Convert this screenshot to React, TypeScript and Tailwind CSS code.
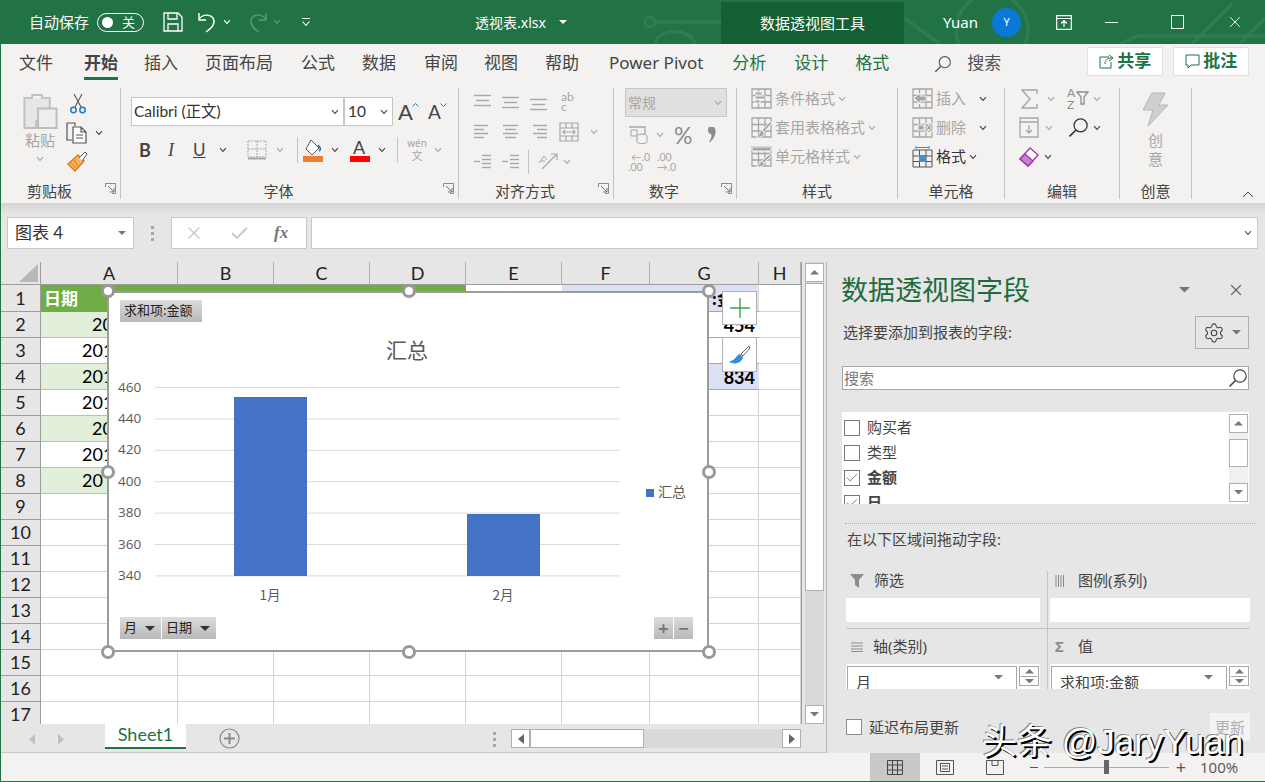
import React from 'react';
import { Settings, X, Check } from 'lucide-react';

const Chev = ({ c = '#444', className = '' }: { c?: string; className?: string }) => (
	<svg width="8" height="6" viewBox="0 0 8 6" className={`shrink-0 ${className}`}>
		<path d="M1 1.2 4 4.4 7 1.2" fill="none" stroke={c} strokeWidth="1.1" />
	</svg>
);

const Caret = ({ c = '#666', w = 10, up = false }: { c?: string; w?: number; up?: boolean }) => (
	<svg width={w} height={w / 2} viewBox="0 0 10 5" className="shrink-0">
		<path d={up ? 'M0 5 5 0 10 5Z' : 'M0 0 5 5 10 0Z'} fill={c} />
	</svg>
);

const Glass = ({ s = 20, c = '#444' }: { s?: number; c?: string }) => (
	<svg width={s} height={s} viewBox="0 0 20 20" className="shrink-0">
		<circle cx="12" cy="8" r="6.2" fill="none" stroke={c} strokeWidth="1.2" />
		<path d="M7.6 12.4 1.5 18.5" stroke={c} strokeWidth="1.5" />
	</svg>
);

// align-group line icon, each entry: [x1, x2, y]
const Lines = ({ rows, c = '#a8a8a8' }: { rows: number[][]; c?: string }) => (
	<svg width="19" height="18" viewBox="0 0 19 18" className="shrink-0">
		{rows.map((r, i) => (
			<path key={i} d={`M${r[0]} ${r[2]}.5H${r[1]}`} stroke={c} strokeWidth="1.4" />
		))}
	</svg>
);

const Launcher = () => (
	<svg width="11" height="11" viewBox="0 0 11 11" className="absolute right-[4px] bottom-[5px]">
		<path d="M.5 4V.5H10.5V10.5H7" fill="none" stroke="#8a8a8a" />
		<path d="M3 3 9 9M9 5V9H5" fill="none" stroke="#777" />
	</svg>
);

const Group = ({ w, label, launcher, children }: { w: string; label: string; launcher?: boolean; children: React.ReactNode }) => (
	<div className={`relative flex flex-col shrink-0 my-[4px] border-r border-[#c4c2c0] ${w}`}>
		<div className="flex-1 -mt-[4px] min-h-0">{children}</div>
		<div className={`h-[17px] text-center text-[15px] leading-[14px] text-[#444] -mb-[2px] ${launcher ? 'pr-[22px]' : ''}`}>{label}</div>
		{launcher && <Launcher />}
	</div>
);

const tabs = [
	{ t: '文件', c: 'ml-[18px] text-[#444]' },
	{ t: '开始', c: 'ml-[31px] font-bold text-[#444] border-b-[3px] border-[#217346]' },
	{ t: '插入', c: 'ml-[26px] text-[#444]' },
	{ t: '页面布局', c: 'ml-[27px] text-[#444]' },
	{ t: '公式', c: 'ml-[28px] text-[#444]' },
	{ t: '数据', c: 'ml-[27px] text-[#444]' },
	{ t: '审阅', c: 'ml-[28px] text-[#444]' },
	{ t: '视图', c: 'ml-[26px] text-[#444]' },
	{ t: '帮助', c: 'ml-[27px] text-[#444]' },
	{ t: 'Power Pivot', c: 'ml-[30px] text-[#444]' },
	{ t: '分析', c: 'ml-[29px] text-[#217346]' },
	{ t: '设计', c: 'ml-[28px] text-[#217346]' },
	{ t: '格式', c: 'ml-[27px] text-[#217346]' },
];

const TitleBar = () => (
	<div className="relative flex items-center h-[44px] shrink-0 bg-[#217346] text-white overflow-hidden">
		<svg width="1265" height="44" viewBox="0 0 1265 44" className="absolute left-0 top-0">
			<g fill="none" stroke="#2f7c53" strokeWidth="3.5">
				<circle cx="650" cy="22" r="5" />
				<path d="M655 22H721M655 44C656 35 668 30 680 32 690 34 694 40 695 44M904 18 940 44" />
				<circle cx="992" cy="30" r="36" />
				<path d="M1120 44 1137 36H1265M1192 44 1232 4M1240 44 1265 18" />
			</g>
		</svg>
		<span className="relative ml-[29px] w-[60px] text-[15px] whitespace-nowrap">自动保存</span>
		<div className="relative flex items-center justify-between ml-[8px] w-[47px] h-[19px] rounded-full border border-white pl-[4px] pr-[8px]">
			<span className="w-[11px] h-[11px] rounded-full bg-white" />
			<span className="text-[13px] leading-none">关</span>
		</div>
		<svg width="20" height="20" viewBox="0 0 20 20" className="relative ml-[19px]">
			<path d="M1 1H15L19 5V19H1ZM5 1V7H14V1M5 19V12H15V19" fill="none" stroke="#fff" strokeWidth="1.3" />
		</svg>
		<svg width="21" height="22" viewBox="0 0 21 22" className="relative ml-[14px]">
			<path d="M2 2V9H9M2 8C6 3 13 3 16 7 19 12 15 17 9 21" fill="none" stroke="#fff" strokeWidth="1.4" />
		</svg>
		<Chev c="#fff" className="relative ml-[5px]" />
		<svg width="21" height="22" viewBox="0 0 21 22" className="relative ml-[16px]">
			<path d="M19 2V9H12M19 8C15 3 8 3 5 7 2 12 6 17 12 21" fill="none" stroke="#5f9a7b" strokeWidth="1.4" />
		</svg>
		<Chev c="#5f9a7b" className="relative ml-[5px]" />
		<svg width="10" height="10" viewBox="0 0 10 10" className="relative ml-[20px]">
			<path d="M1 1.5H9M1.5 4.5 5 8.5 8.5 4.5" fill="none" stroke="#fff" strokeWidth="1.1" />
		</svg>
		<span className="relative ml-[164px] w-[77px] text-[14px] whitespace-nowrap">透视表.xlsx</span>
		<span className="relative ml-[7px]"><Caret c="#fff" w={8} /></span>
		<div className="relative flex items-center justify-center self-end ml-[154px] w-[183px] h-[42px] bg-[#155f34] text-[15px]">数据透视图工具</div>
		<span className="relative ml-[39px] w-[35px] text-[15px]">Yuan</span>
		<div className="relative flex items-center justify-center ml-[14px] w-[29px] h-[29px] rounded-full bg-[#0a78d8] text-[11px]">Y</div>
		<svg width="16" height="15" viewBox="0 0 16 15" className="relative ml-[35px]">
			<path d="M.7.7H15.3V14.3H.7ZM.7 3.5H15.3M8 12V6M5 8.5 8 5.5 11 8.5" fill="none" stroke="#fff" strokeWidth="1.2" />
		</svg>
		<span className="relative ml-[33px] w-[13px] h-[1px] bg-white" />
		<span className="relative ml-[53px] w-[13px] h-[14px] border border-white" />
		<X size={18} strokeWidth={1.2} className="relative ml-[42px]" />
	</div>
);

const TabRow = () => (
	<div className="flex items-center h-[40px] shrink-0 bg-[#f3f2f1] text-[17px]">
		{tabs.map(tab => (
			<span key={tab.t} className={`h-[32px] leading-[30px] whitespace-nowrap ${tab.c}`}>{tab.t}</span>
		))}
		<span className="ml-[45px]"><Glass s={18} c="#555" /></span>
		<span className="ml-[15px] h-[32px] leading-[30px] text-[#555]">搜索</span>
		<div className="flex items-center justify-center ml-[86px] mb-[6px] w-[76px] h-[29px] bg-white border border-[#e1dfdd] rounded-[2px] text-[#217346] font-bold text-[17px]">
			<svg width="15" height="15" viewBox="0 0 15 15" className="mr-[3px]">
				<path d="M10 3H1V14H12V8M6 10C6 6 8 4 13 4M10 1 14 4 10 7" fill="none" stroke="#217346" />
			</svg>
			共享
		</div>
		<div className="flex items-center justify-center ml-[10px] mb-[6px] w-[76px] h-[29px] bg-white border border-[#e1dfdd] rounded-[2px] text-[#217346] font-bold text-[17px]">
			<svg width="15" height="15" viewBox="0 0 15 15" className="mr-[3px]">
				<path d="M1 1H14V11H6L3 14V11H1Z" fill="none" stroke="#217346" />
			</svg>
			批注
		</div>
	</div>
);

const lineL = [[1, 15, 2], [1, 11, 6], [1, 15, 10], [1, 11, 14]];
const lineC = [[2, 17, 2], [4, 15, 6], [2, 17, 10], [4, 15, 14]];
const lineR = [[4, 18, 2], [8, 18, 6], [4, 18, 10], [8, 18, 14]];
const GRID = '#a6a6a6';

// grid glyph of the styles / cells rows, extra = what is drawn over the grid
const SmallGrid = ({ extra }: { extra: string }) => (
	<svg width="21" height="21" viewBox="0 0 21 21" className="shrink-0">
		<path d="M1 1H20V20H1ZM7.5 1V20M14 1V20M1 7.5H20M1 14H20" fill="none" stroke={GRID} strokeWidth="1.3" />
		<path d={extra} fill="#a6a6a6" stroke="#f3f2f1" strokeWidth="1" />
	</svg>
);

const styleRows = [
	{ t: '条件格式', d: 'M4 4H11V7H4ZM4 8H15V11H4ZM4 12H9V15H4Z' },
	{ t: '套用表格格式', d: 'M20 4 21 6 13 15 11 13ZM11 13C8 14 9 18 5 20 10 21 14 19 13 15Z' },
	{ t: '单元格样式', d: 'M1 1H20V5H1ZM20 7 21 9 13 17 11 15ZM11 15C8 16 9 19 5 21 10 21 14 20 13 17Z' },
];

const Ribbon = () => (
	<div className="flex h-[119px] shrink-0 bg-[#f3f2f1]">
		<Group w="w-[120px]" label="剪贴板" launcher>
			<div className="flex pl-[21px] pt-[9px]">
				<div className="flex flex-col items-center w-[36px]">
					<svg width="36" height="36" viewBox="0 0 36 37">
						<path d="M2 5H28V29H14V36H2Z" fill="#e6e6e6" stroke="#c0c0c0" strokeWidth="2" />
						<path d="M10 6V2H20V6" fill="#f3f2f1" stroke="#c0c0c0" strokeWidth="2" />
						<path d="M16 16H35V36H16Z" fill="#eee" stroke="#bdbdbd" strokeWidth="2" />
					</svg>
					<span className="mt-[1px] text-[15px] leading-[20px] text-[#a6a6a6] whitespace-nowrap">粘贴</span>
					<Chev c="#a6a6a6" className="mt-[6px]" />
				</div>
				<div className="flex flex-col ml-[8px]">
					<svg width="20" height="21" viewBox="0 0 20 21" className="ml-[2px]">
						<path d="M6 1 13 14M14 1 7 14" stroke="#555" strokeWidth="1.1" />
						<circle cx="5.5" cy="17" r="2.7" fill="none" stroke="#1f78c8" strokeWidth="1.5" />
						<circle cx="14.5" cy="17" r="2.7" fill="none" stroke="#1f78c8" strokeWidth="1.5" />
					</svg>
					<div className="flex items-center mt-[8px]">
						<svg width="22" height="22" viewBox="0 0 22 22">
							<path d="M1 1H9V4M1 1V18H6" fill="none" stroke="#555" strokeWidth="1.2" />
							<path d="M7 5H15L20 10V21H7ZM15 5V10H20M10 13H17M10 16H17" fill="#fff" stroke="#555" strokeWidth="1.2" />
						</svg>
						<Chev className="ml-[7px]" />
					</div>
					<svg width="22" height="21" viewBox="0 0 22 21" className="mt-[7px]">
						<path d="M12 4 18 10 9 20 2 13Z" fill="#f4b459" stroke="#e07b12" strokeWidth="1.4" />
						<path d="M5 12 11 18M8 9 13 16" stroke="#e07b12" />
						<path d="M13 7 19 1 21 3 16 10" fill="#fff" stroke="#555" />
					</svg>
				</div>
			</div>
		</Group>
		<Group w="w-[338px]" label="字体" launcher>
			<div className="flex items-center pl-[10px] pt-[13px]">
				<div className="flex items-center justify-between w-[213px] h-[29px] bg-white border border-[#c8c6c4] pl-[2px] pr-[4px] font-['Lato','Noto_Sans_CJK_SC',sans-serif] text-[15.5px] text-[#333]">
					Calibri (正文)<Chev />
				</div>
				<div className="flex items-center justify-between w-[49px] h-[29px] bg-white border border-[#c8c6c4] pl-[3px] pr-[4px] font-['Lato',sans-serif] text-[15.5px] text-[#333]">
					10<Chev />
				</div>
				<span className="relative ml-[5px] w-[22px] text-[22px] leading-none text-[#444] font-['Lato',sans-serif]">A<svg width="7" height="4" viewBox="0 0 7 4" className="absolute left-[14px] top-[2px]"><path d="M.5 3.5 3.5.5 6.5 3.5" fill="none" stroke="#1f78c8" /></svg></span>
				<span className="relative ml-[8px] w-[20px] text-[19px] leading-none text-[#444] font-['Lato',sans-serif]">A<svg width="7" height="4" viewBox="0 0 7 4" className="absolute left-[12px] top-[1px]"><path d="M.5.5 3.5 3.5 6.5.5" fill="none" stroke="#1f78c8" /></svg></span>
			</div>
			<div className="flex items-center pl-[18px] mt-[10px] h-[28px] text-[#444]">
				<span className="w-[12px] text-[18px] font-bold font-['Lato',sans-serif]">B</span>
				<span className="ml-[17px] w-[8px] text-[18px] italic font-['Liberation_Serif',serif]">I</span>
				<span className="ml-[17px] w-[13px] text-[17px] underline font-['Lato',sans-serif]">U</span>
				<Chev className="ml-[13px]" />
				<svg width="20" height="20" viewBox="0 0 20 20" className="ml-[20px]">
					<path d="M1 1H19V17H1ZM10 1V17M1 9H19" fill="none" stroke={GRID} strokeDasharray="2 1" />
					<path d="M1 18.5H19" stroke={GRID} strokeWidth="2" />
				</svg>
				<Chev c="#a6a6a6" className="ml-[9px]" />
				<span className="ml-[13px] mr-[5px] w-px h-[26px] bg-[#c4c2c0]" />
				<svg width="20" height="23" viewBox="0 0 20 23">
					<path d="M8 1 16 9 9 16 3 10Z" fill="#fff" stroke="#555" />
					<path d="M15 6C18 9 18 11 16 12" fill="none" stroke="#1f6eb5" strokeWidth="1.5" />
					<path d="M0 17H20V23H0Z" fill="#ed7d31" />
				</svg>
				<Chev className="ml-[8px]" />
				<div className="relative ml-[11px] w-[20px] h-[23px]">
					<span className="absolute left-[3px] -top-[2px] text-[18px] leading-[20px] font-['Lato',sans-serif]">A</span>
					<span className="absolute left-0 bottom-0 w-[20px] h-[6px] bg-[#ff0000]" />
				</div>
				<Chev className="ml-[8px]" />
				<span className="ml-[11px] w-px h-[26px] bg-[#c4c2c0]" />
				<div className="flex flex-col items-center ml-[9px] w-[20px] text-[#a6a6a6]">
					<span className="text-[10px] leading-[11px]">wén</span>
					<span className="text-[11px] leading-[13px]">文</span>
				</div>
				<Chev c="#a6a6a6" className="ml-[7px]" />
			</div>
		</Group>
		<Group w="w-[155px]" label="对齐方式" launcher>
			<div className="flex flex-col pl-[14px] pt-[8px] gap-[11px]">
				<div className="flex items-center gap-[9px] h-[19px]">
					<Lines rows={[[1, 18, 2], [3, 16, 7], [1, 18, 12]]} />
					<Lines rows={[[1, 18, 4], [3, 16, 9], [1, 18, 14]]} />
					<Lines rows={[[1, 18, 6], [3, 16, 11], [1, 18, 16]]} />
					<div className="flex flex-col ml-[4px] w-[19px] text-[12px] leading-[10px] text-[#a6a6a6] font-['Lato',sans-serif]"><span>ab</span><span>c</span></div>
				</div>
				<div className="flex items-center gap-[9px] h-[19px]">
					<Lines rows={lineL} />
					<Lines rows={lineC} />
					<Lines rows={lineR} />
					<svg width="20" height="20" viewBox="0 0 20 20" className="ml-[2px]">
						<path d="M1 1H19V19H1ZM1 6H19M1 14H19M7 6V1M7 14V19M13 6V1M13 14V19M4 10H16M6 8 4 10 6 12M14 8 16 10 14 12" fill="none" stroke={GRID} strokeWidth="1.2" />
					</svg>
					<Chev c="#a6a6a6" className="ml-[2px]" />
				</div>
				<div className="flex items-center h-[19px]">
					<Lines rows={[[9, 18, 2], [9, 18, 6], [9, 18, 10], [9, 18, 14], [1, 7, 8]]} />
					<span className="ml-[9px]"><Lines rows={[[9, 18, 2], [9, 18, 6], [9, 18, 10], [9, 18, 14], [1, 7, 8]]} /></span>
					<span className="ml-[8px] mr-[8px] w-px h-[24px] bg-[#c4c2c0]" />
					<svg width="21" height="21" viewBox="0 0 21 21">
						<path d="M5 18 19 4M14 3H20V9" fill="none" stroke={GRID} strokeWidth="1.2" />
						<path d="M2 12 7 5 10 9M4 10H8" fill="none" stroke={GRID} />
					</svg>
					<Chev c="#a6a6a6" className="ml-[5px]" />
				</div>
			</div>
		</Group>
		<Group w="w-[123px]" label="数字" launcher>
			<div className="flex items-center justify-between ml-[11px] mt-[4px] w-[102px] h-[29px] bg-[#e1e0df] border border-[#c8c6c4] px-[2px] pr-[4px] text-[14px] text-[#a6a6a6]">
				常规<Chev c="#a6a6a6" />
			</div>
			<div className="flex items-center ml-[14px] mt-[6px] h-[24px]">
				<svg width="20" height="20" viewBox="0 0 20 20">
					<path d="M1 2H17V14H10" fill="none" stroke={GRID} strokeWidth="1.3" />
					<path d="M3 5H9V11H3Z" fill="none" stroke={GRID} />
					<ellipse cx="14" cy="11" rx="5" ry="2" fill="#f3f2f1" stroke={GRID} />
					<path d="M9 11V17C9 19 19 19 19 17V11" fill="#f3f2f1" stroke={GRID} />
				</svg>
				<Chev c="#a6a6a6" className="ml-[8px]" />
				<span className="ml-[10px] w-[24px] text-[23px] leading-none text-[#8c8c8c] font-['Lato',sans-serif]">%</span>
				<svg width="10" height="16" viewBox="0 0 10 16" className="ml-[9px]">
					<path d="M2 0H7C10 3 9 11 2 16 4 11 5 9 4 7 2 7 1 5 1 3 1 2 1 1 2 0Z" fill="#8c8c8c" />
				</svg>
			</div>
			<div className="flex items-center ml-[14px] mt-[3px] h-[24px] text-[10.5px] leading-[10px] text-[#a6a6a6] font-['Lato',sans-serif]">
				<div className="flex flex-col w-[22px]"><span className="text-right">←.0</span><span>.00</span></div>
				<div className="flex flex-col w-[22px] ml-[7px]"><span>.00</span><span>→.0</span></div>
			</div>
		</Group>
		<Group w="w-[161px]" label="样式">
			<div className="flex flex-col pl-[14px] text-[15px] text-[#a6a6a6]">
				{styleRows.map(row => (
					<div key={row.t} className="flex items-center h-[29px]">
						<SmallGrid extra={row.d} />
						<span className="ml-[3px] whitespace-nowrap">{row.t}</span>
						<Chev c="#a6a6a6" className="ml-[3px]" />
					</div>
				))}
			</div>
		</Group>
		<Group w="w-[107px]" label="单元格">
			<div className="flex flex-col pl-[14px] text-[15px] text-[#a6a6a6]">
				<div className="flex items-center h-[29px]">
					<SmallGrid extra="M2 10 8 5V8H14V13H8V16Z" />
					<span className="ml-[3px] w-[32px]">插入</span>
					<Chev className="ml-[11px]" />
				</div>
				<div className="flex items-center h-[29px]">
					<SmallGrid extra="M6 8H12V13H6ZM13 7 15 6 17 9 19 6 21 7 18.5 10.5 21 14 19 15 17 12 15 15 13 14 15.5 10.5Z" />
					<span className="ml-[3px] w-[32px]">删除</span>
					<Chev className="ml-[11px]" />
				</div>
				<div className="flex items-center h-[29px] text-[#333]">
					<svg width="21" height="22" viewBox="0 0 21 22" className="shrink-0">
						<path d="M1 4H20V21H1ZM7.5 4V21M14 4V21M1 10H20M1 15.5H20" fill="none" stroke="#555" />
						<path d="M7 9H14V16H7Z" fill="#3f90d8" />
						<path d="M4 1.5H17M4 0V3M17 0V3" stroke="#3f90d8" />
					</svg>
					<span className="ml-[3px]">格式</span>
					<Chev className="ml-[3px]" />
				</div>
			</div>
		</Group>
		<Group w="w-[115px]" label="编辑">
			<div className="flex flex-col pl-[14px]">
				<div className="flex items-center h-[29px]">
					<svg width="18" height="20" viewBox="0 0 18 20" className="ml-[2px]">
						<path d="M16 5V1H1L9 10 1 19H16V15" fill="none" stroke={GRID} strokeWidth="1.4" />
					</svg>
					<Chev c="#a6a6a6" className="ml-[8px]" />
					<span className="relative ml-[12px] w-[22px] h-[24px] text-[12px] leading-[12px] text-[#8c8c8c] font-['Lato',sans-serif]">
						A<br />Z
						<svg width="13" height="14" viewBox="0 0 13 14" className="absolute right-0 top-[4px]"><path d="M1 1H12L8 6V13H5V6Z" fill="none" stroke="#8c8c8c" strokeWidth="1.3" /></svg>
					</span>
					<Chev c="#a6a6a6" className="ml-[4px]" />
				</div>
				<div className="flex items-center h-[29px]">
					<svg width="20" height="21" viewBox="0 0 20 21">
						<path d="M1 1H19V20H1ZM1 5H19M10 8V16M7 13 10 16 13 13" fill="none" stroke={GRID} strokeWidth="1.3" />
					</svg>
					<Chev c="#a6a6a6" className="ml-[6px]" />
					<span className="ml-[15px]"><Glass s={21} c="#333" /></span>
					<Chev className="ml-[4px]" />
				</div>
				<div className="flex items-center h-[29px]">
					<svg width="20" height="20" viewBox="0 0 20 20">
						<path d="M1 12 11 1 19 8 9 19Z" fill="#fff" stroke="#a23bb0" strokeWidth="1.4" />
						<path d="M1 12 6 7 14 14 9 19Z" fill="#c67fd0" stroke="#a23bb0" strokeWidth="1.4" />
					</svg>
					<Chev className="ml-[5px]" />
				</div>
			</div>
		</Group>
		<Group w="w-[72px]" label="创意">
			<div className="flex flex-col items-center pt-[8px] text-[15px] leading-[19px] text-[#a6a6a6]">
				<svg width="27" height="35" viewBox="0 0 27 35">
					<path d="M10 1H23L17 13H26L6 34 11 18H1Z" fill="#cfcfcf" stroke="#b5b5b5" />
				</svg>
				<span className="mt-[4px]">创</span>
				<span>意</span>
			</div>
		</Group>
		<div className="flex-1 flex items-end justify-end pr-[11px] pb-[5px]">
			<svg width="12" height="7" viewBox="0 0 12 7"><path d="M1 6 6 1 11 6" fill="none" stroke="#444" /></svg>
		</div>
	</div>
);

const FormulaBar = () => (
	<div className="flex items-start h-[59px] shrink-0 pt-[14px] bg-gradient-to-b from-[#d4d4d4] to-[#e6e6e6] to-[12px]">
		<div className="flex items-center justify-between ml-[6px] w-[127px] h-[32px] bg-white border border-[#c8c8c8] pl-[7px] pr-[7px] text-[17px] text-[#333] font-['Lato','Noto_Sans_CJK_SC',sans-serif]">
			图表 4<Caret c="#777" w={8} />
		</div>
		<div className="flex flex-col gap-[3px] ml-[17px] mt-[9px] w-[3px]">
			<span className="h-[3px] bg-[#a6a6a6]" /><span className="h-[3px] bg-[#a6a6a6]" /><span className="h-[3px] bg-[#a6a6a6]" />
		</div>
		<div className="flex items-center ml-[17px] w-[136px] h-[32px] bg-white border border-[#c8c8c8]">
			<X size={20} strokeWidth={1.6} className="ml-[12px] text-[#c8c8c8]" />
			<Check size={21} strokeWidth={2.2} className="ml-[25px] text-[#c8c8c8]" />
			<span className="ml-[24px] text-[17px] italic font-bold font-['Liberation_Serif',serif] text-[#777]">fx</span>
		</div>
		<div className="flex items-center justify-end ml-[4px] w-[947px] h-[32px] bg-white border border-[#c8c8c8] pr-[5px]">
			<Chev c="#555" />
		</div>
	</div>
);

const colNames = ['A', 'B', 'C', 'D', 'E', 'F', 'G', 'H'];
const rowNums = Array.from({ length: 17 }, (_, i) => i + 1);
const colA: Record<number, { t: string; p: string }> = {
	2: { t: '20', p: 'pl-[51px]' },
	3: { t: '201', p: 'pl-[41px]' },
	4: { t: '201', p: 'pl-[41px]' },
	5: { t: '201', p: 'pl-[41px]' },
	6: { t: '20', p: 'pl-[51px]' },
	7: { t: '201', p: 'pl-[41px]' },
	8: { t: '20', p: 'pl-[41px]' },
};

const Cell = ({ r, c }: { r: number; c: number }) => {
	const h = r === 1 ? 'h-[27px]' : 'h-[26px]';
	if (c === 0) {
		if (r === 1) return <div className={`${h} bg-[#70ad47] text-white font-bold text-[17px] leading-[26px] pl-[3px] font-['Noto_Sans_CJK_SC',sans-serif]`}>日期</div>;
		if (r <= 8) {
			return (
				<div className={`${h} overflow-hidden border-b border-[#a9d18e] text-[18px] leading-[25px] whitespace-nowrap text-black ${colA[r].p} ${r % 2 === 0 ? 'bg-[#e2efda]' : 'bg-white'}`}>
					{colA[r].t}
				</div>
			);
		}
	}
	if (r === 1 && c >= 1 && c <= 3) return <div className={`${h} bg-[#70ad47]`} />;
	if (r === 1 && c === 4) return <div className={`${h} bg-white`} />;
	if (r === 1 && c === 5) return <div className={`${h} bg-[#d9e1f2]`} />;
	if (c === 6 && r <= 4) {
		const text = r === 1 ? ':金额' : r === 2 ? '454' : r === 4 ? '834' : '';
		return (
			<div className={`${h} overflow-hidden border-b border-[#8ea9db] text-right pr-[4px] font-bold text-black whitespace-nowrap text-[18px] leading-[26px] ${r === 1 || r === 4 ? 'bg-[#d9e1f2]' : 'bg-white'}`}>
				{r === 1 ? <span className="pr-[6px] text-[16px] font-['Noto_Sans_CJK_SC',sans-serif]">{text}</span> : text}
			</div>
		);
	}
	return <div className={`${h} border-r border-b border-[#d4d4d4] bg-white`} />;
};

const Handle = ({ p }: { p: string }) => (
	<span className={`absolute w-[14px] h-[14px] rounded-full bg-white border-[3px] border-[#999] ${p}`} />
);

const FieldBtn = ({ children, w }: { children: React.ReactNode; w: string }) => (
	<div className={`flex items-center h-[22px] px-[4px] bg-gradient-to-b from-[#dcdcdc] to-[#b8b8b8] text-[13px] text-[#222] whitespace-nowrap ${w}`}>
		{children}
	</div>
);

const ticks = [460, 440, 420, 400, 380, 360, 340];

const Chart = () => (
	<div className="absolute left-[106px] top-[29px] w-[602px] h-[361px] bg-white border-2 border-[#9c9c9c]">
		<svg width="597" height="357" viewBox="0 0 597 357" className="absolute left-[1px] top-0 font-['Noto_Sans_CJK_SC',sans-serif]">
			<text x="297" y="65" textAnchor="middle" fontSize="21" fill="#595959">汇总</text>
			{ticks.map((t, i) => (
				<g key={t}>
					<path d={`M45 ${94.5 + i * 31.4}H510`} stroke="#d9d9d9" />
					<text x="8" y={98.5 + i * 31.4} fontSize="13.5" fill="#595959" fontFamily="Open Sans">{t}</text>
				</g>
			))}
			<rect x="124" y="104" width="73" height="179" fill="#4472c4" />
			<rect x="357" y="221" width="73" height="62" fill="#4472c4" />
			<text x="160" y="307" textAnchor="middle" fontSize="13.5" fill="#595959">1月</text>
			<text x="393" y="307" textAnchor="middle" fontSize="13.5" fill="#595959">2月</text>
			<rect x="536" y="196" width="8" height="8" fill="#4472c4" />
			<text x="548" y="204" fontSize="14" fill="#595959">汇总</text>
		</svg>
		<div className="absolute left-[11px] top-[7px]">
			<FieldBtn w="w-[82px]">求和项:金额</FieldBtn>
		</div>
		<div className="absolute left-[11px] bottom-[11px] flex gap-px">
			<FieldBtn w="w-[41px] justify-between pr-[6px]">月<Caret c="#333" w={10} /></FieldBtn>
			<FieldBtn w="w-[54px] justify-between pr-[6px]">日期<Caret c="#333" w={10} /></FieldBtn>
		</div>
		<div className="absolute right-[14px] bottom-[11px] flex gap-px text-[#777] font-bold text-[18px]">
			<span className="flex items-center justify-center w-[19px] h-[22px] bg-gradient-to-b from-[#dcdcdc] to-[#b8b8b8]">+</span>
			<span className="flex items-center justify-center w-[19px] h-[22px] bg-gradient-to-b from-[#dcdcdc] to-[#b8b8b8]">−</span>
		</div>
		<Handle p="-left-[8px] -top-[9px]" />
		<Handle p="left-[293px] -top-[9px]" />
		<Handle p="-right-[9px] -top-[9px]" />
		<Handle p="-left-[8px] top-[172px]" />
		<Handle p="-right-[9px] top-[172px]" />
		<Handle p="-left-[8px] -bottom-[9px]" />
		<Handle p="left-[293px] -bottom-[9px]" />
		<Handle p="-right-[9px] -bottom-[9px]" />
	</div>
);

const VScroll = () => (
	<div className="flex flex-col ml-[3px] w-[19px] h-[462px] bg-[#d9d9d9]">
		<div className="flex items-center justify-center h-[19px] mt-[1px] bg-white border border-[#b0b0b0]"><Caret c="#777" w={9} up /></div>
		<div className="h-[308px] bg-white border border-[#b0b0b0] mt-[1px]" />
		<div className="flex-1" />
		<div className="flex items-center justify-center h-[19px] bg-white border border-[#b0b0b0]"><Caret c="#777" w={9} /></div>
	</div>
);

const Sheet = () => (
	<div className="relative flex h-[462px] shrink-0 bg-[#e6e6e6] overflow-hidden">
		<div className="w-[801px] shrink-0 grid grid-cols-[40px_137px_96px_96px_96px_96px_88px_109px_42px] content-start border-r border-[#9c9c9c] font-['Lato','Noto_Sans_CJK_SC',sans-serif]">
			<div className="relative h-[23px] border-r border-b border-[#9c9c9c]">
				<svg width="19" height="18" viewBox="0 0 19 18" className="absolute right-[2px] bottom-[2px]"><path d="M19 0V18H0Z" fill="#b8b8b8" /></svg>
			</div>
			{colNames.map(n => (
				<div key={n} className="h-[23px] flex items-center justify-center border-r border-b border-r-[#b0b0b0] border-b-[#9c9c9c] text-[18px] text-[#222]">{n}</div>
			))}
			{rowNums.map(r => (
				<React.Fragment key={r}>
					<div className={`${r === 1 ? 'h-[27px]' : 'h-[26px]'} flex items-center justify-center border-r border-b border-[#9c9c9c] bg-[#e6e6e6] text-[18px] text-[#222]`}>{r}</div>
					{colNames.map((n, c) => <Cell key={n} r={r} c={c} />)}
				</React.Fragment>
			))}
		</div>
		<VScroll />
		<Chart />
		<div className="absolute left-[721px] top-[29px] flex items-center justify-center w-[35px] h-[34px] bg-white border border-[#b0b0b0]">
			<svg width="22" height="22" viewBox="0 0 22 22"><path d="M11 1V21M1 11H21" stroke="#3aa655" strokeWidth="1.4" /></svg>
		</div>
		<div className="absolute left-[721px] top-[75px] flex items-center justify-center w-[35px] h-[35px] bg-white border border-[#b0b0b0]">
			<svg width="23" height="20" viewBox="0 0 23 20">
				<path d="M21 1 13 9 15 11 22 3Z" fill="#fff" stroke="#666" />
				<path d="M12 9C8 10 9 14 1 17 7 20 14 18 15 12Z" fill="#2f8fdd" />
			</svg>
		</div>
	</div>
);

const SheetBar = () => (
	<div className="flex items-start h-[29px] shrink-0 bg-[#e6e6e6] border-b border-[#c8c8c8]">
		<svg width="6" height="11" viewBox="0 0 6 11" className="ml-[28px] mt-[10px]"><path d="M6 0V11L0 5.5Z" fill="#c0c0c0" /></svg>
		<svg width="6" height="11" viewBox="0 0 6 11" className="ml-[23px] mt-[10px]"><path d="M0 0V11L6 5.5Z" fill="#c0c0c0" /></svg>
		<div className="ml-[41px] w-[81px] h-[25px] bg-white border-b-[2px] border-[#217346] text-center text-[#217346] text-[18px] leading-[21px] font-['Lato',sans-serif]">Sheet1</div>
		<svg width="21" height="21" viewBox="0 0 21 21" className="ml-[33px] mt-[4px]">
			<circle cx="10.5" cy="10.5" r="9.5" fill="none" stroke="#8c8c8c" strokeWidth="1.2" />
			<path d="M10.5 5V16M5 10.5H16" stroke="#8c8c8c" strokeWidth="2" />
		</svg>
		<div className="flex flex-col gap-[3px] ml-[253px] mt-[8px] w-[3px]">
			<span className="h-[3px] bg-[#a6a6a6]" /><span className="h-[3px] bg-[#a6a6a6]" /><span className="h-[3px] bg-[#a6a6a6]" />
		</div>
		<div className="flex ml-[15px] mt-[5px] w-[290px] h-[19px] bg-[#d9d9d9]">
			<div className="flex items-center justify-center w-[19px] bg-white border border-[#b0b0b0]">
				<svg width="6" height="10" viewBox="0 0 6 10"><path d="M6 0V10L0 5Z" fill="#666" /></svg>
			</div>
			<div className="w-[114px] bg-white border border-[#b0b0b0]" />
			<div className="flex-1" />
			<div className="flex items-center justify-center w-[19px] bg-white border border-[#b0b0b0]">
				<svg width="6" height="10" viewBox="0 0 6 10"><path d="M0 0V10L6 5Z" fill="#666" /></svg>
			</div>
		</div>
	</div>
);

const Box = ({ on, bold, children }: { on?: boolean; bold?: boolean; children: React.ReactNode }) => (
	<div className={`flex items-center h-[25px] shrink-0 text-[15px] text-[#444] ${bold ? 'font-bold' : ''}`}>
		<span className="flex items-center justify-center ml-[2px] w-[16px] h-[16px] border border-[#777] bg-white">
			{on && <Check size={14} strokeWidth={1.5} className="text-[#666]" />}
		</span>
		<span className="ml-[7px]">{children}</span>
	</div>
);

const AreaCombo = ({ t }: { t: string }) => (
	<div className="flex w-full bg-white h-[25px] overflow-hidden pt-[2px] px-[1px]">
		<div className="flex-1 flex justify-between pl-[8px] pr-[13px] pt-[3px] h-[30px] border border-[#a6a6a6] text-[15px] leading-[24px] text-[#444]">
			{t}<span className="mt-[5px]"><Caret c="#777" w={9} /></span>
		</div>
		<div className="flex flex-col items-center justify-center gap-[2px] ml-[2px] w-[20px] h-[20px] border border-[#a6a6a6]">
			<Caret c="#777" w={9} up />
			<span className="w-[16px] h-px bg-[#a6a6a6]" />
			<Caret c="#777" w={9} />
		</div>
	</div>
);

const Pane = () => (
	<div className="flex flex-col w-[439px] h-[491px] shrink-0 bg-[#e6e6e6] border-l border-[#b8b8b8] pb-[3px] text-[#444]">
		<div className="flex items-center h-[36px] mt-[10px] shrink-0 pl-[14px]">
			<span className="w-[338px] text-[27px] leading-[36px] text-[#1f6b3f] whitespace-nowrap">数据透视图字段</span>
			<Caret c="#777" w={11} />
			<X size={18} strokeWidth={1.6} className="ml-[37px] text-[#666]" />
		</div>
		<div className="flex items-center justify-between h-[33px] mt-[8px] shrink-0 pl-[16px] pr-[16px] text-[15px]">
			选择要添加到报表的字段:
			<div className="flex items-center justify-center gap-[7px] w-[54px] h-[33px] border border-[#b0b0b0]">
				<Settings size={22} strokeWidth={1.2} className="text-[#444]" />
				<Caret c="#777" w={9} />
			</div>
		</div>
		<div className="flex items-center justify-between ml-[15px] mt-[17px] w-[407px] h-[24px] shrink-0 bg-white border border-[#a6a6a6] pl-[1px] text-[15px] text-[#777]">
			搜索<Glass s={20} c="#444" />
		</div>
		<div className="flex ml-[15px] mt-[22px] w-[407px] h-[92px] shrink-0 bg-white overflow-hidden">
			<div className="flex-1 flex flex-col pt-[3px]">
				<Box>购买者</Box>
				<Box>类型</Box>
				<Box on bold>金额</Box>
				<Box on bold>日</Box>
			</div>
			<div className="flex flex-col w-[19px] mr-[1px] my-[2px] bg-[#f0f0f0]">
				<div className="flex items-center justify-center h-[19px] bg-white border border-[#b0b0b0]"><Caret c="#777" w={9} up /></div>
				<div className="h-[28px] mt-[6px] bg-white border border-[#b0b0b0]" />
				<div className="flex-1" />
				<div className="flex items-center justify-center h-[19px] bg-white border border-[#b0b0b0]"><Caret c="#777" w={9} /></div>
			</div>
		</div>
		<div className="ml-[18px] mt-[19px] w-[410px] h-px shrink-0 border-t border-dotted border-[#b0b0b0]" />
		<div className="ml-[20px] mt-[5px] h-[20px] shrink-0 text-[15px] leading-[20px]">在以下区域间拖动字段:</div>
		<div className="grid grid-cols-[202px_202px] ml-[19px] mt-[22px] shrink-0 text-[15px]">
			<div className="flex flex-col h-[58px] border-r border-b border-[#c4c4c4] pr-[7px]">
				<div className="flex items-center h-[27px] pl-[4px] pb-[8px]">
					<svg width="14" height="14" viewBox="0 0 14 14"><path d="M0 0H14L9 6V14L5 11V6Z" fill="#8c8c8c" /></svg>
					<span className="ml-[10px]">筛选</span>
				</div>
				<div className="h-[24px] bg-white" />
			</div>
			<div className="flex flex-col h-[58px] border-b border-[#c4c4c4] pl-[2px]">
				<div className="flex items-center h-[27px] pl-[5px] pb-[8px]">
					<svg width="11" height="12" viewBox="0 0 11 12"><path d="M1 0V12M3.5 0V12M6 0V12M8.5 0V12" stroke="#8c8c8c" /></svg>
					<span className="ml-[12px]">图例(系列)</span>
				</div>
				<div className="h-[24px] bg-white" />
			</div>
			<div className="flex flex-col h-[60px] border-r border-[#c4c4c4] pr-[7px]">
				<div className="flex items-center h-[35px] pl-[5px]">
					<svg width="12" height="10" viewBox="0 0 12 10"><path d="M0 1H12M0 4H12M0 7H12M0 9.5H12" stroke="#8c8c8c" /></svg>
					<span className="ml-[10px]">轴(类别)</span>
				</div>
				<AreaCombo t="月" />
			</div>
			<div className="flex flex-col h-[60px] pl-[2px]">
				<div className="flex items-center h-[35px] pl-[5px]">
					<span className="w-[13px] text-[15px] leading-none font-bold text-[#8c8c8c]">Σ</span>
					<span className="ml-[10px]">值</span>
				</div>
				<AreaCombo t="求和项:金额" />
			</div>
		</div>
		<div className="flex-1" />
		<div className="flex items-center justify-between pl-[19px] pr-[15px] h-[28px] shrink-0 text-[15px]">
			<div className="flex items-center">
				<span className="w-[16px] h-[16px] bg-white border border-[#8c8c8c]" />
				<span className="ml-[7px]">延迟布局更新</span>
			</div>
			<span className="flex items-center justify-center w-[40px] h-[28px] bg-[#f3f3f3] text-[#b0b0b0]">更新</span>
		</div>
		<div className="h-[9px] shrink-0" />
	</div>
);

const StatusBar = () => (
	<div className="flex items-center justify-end h-[28px] shrink-0 bg-[#f3f2f1] text-[#555]">
		<div className="flex items-center justify-center w-[50px] h-[28px] bg-[#c8c8c8]">
			<svg width="16" height="15" viewBox="0 0 16 15"><path d="M.5.5H15.5V14.5H.5ZM5.5.5V14.5M10.5.5V14.5M.5 5H15.5M.5 10H15.5" fill="none" stroke="#444" /></svg>
		</div>
		<svg width="18" height="15" viewBox="0 0 18 15" className="ml-[16px]"><path d="M.5.5H17.5V14.5H.5ZM4.5 3.5H13.5V11.5H4.5ZM6 6H12M6 9H12" fill="none" stroke="#555" /></svg>
		<svg width="18" height="15" viewBox="0 0 18 15" className="ml-[32px]"><path d="M.5.5H17.5V14.5H.5ZM6 .5V5.5H12V.5" fill="none" stroke="#555" /></svg>
		<span className="ml-[26px] w-[8px] h-px bg-[#555]" />
		<div className="relative ml-[6px] w-[125px] h-px bg-[#aaa]">
			<span className="absolute left-[60px] -top-[7px] w-[5px] h-[14px] bg-[#666]" />
		</div>
		<span className="ml-[7px] text-[18px] leading-none">+</span>
		<span className="ml-[14px] mr-[25px] w-[40px] text-[15px] font-['Open_Sans',sans-serif]">100%</span>
	</div>
);

export default function App() {
	return (
		<div className="relative flex flex-col w-[1265px] h-[782px] overflow-hidden bg-[#217346] font-['Noto_Sans','Noto_Sans_CJK_SC',sans-serif]">
			<TitleBar />
			<div className="flex flex-col flex-1 ml-px mb-px bg-[#e6e6e6] overflow-hidden">
				<TabRow />
				<Ribbon />
				<FormulaBar />
				<div className="flex flex-1 min-h-0">
					<div className="flex flex-col w-[825px] shrink-0">
						<Sheet />
						<SheetBar />
					</div>
					<Pane />
				</div>
				<StatusBar />
			</div>
			<div className="absolute left-[982px] top-[720px] text-[35px] leading-[44px] text-white whitespace-nowrap font-['Liberation_Sans','Noto_Sans_CJK_SC',sans-serif] [text-shadow:2px_2px_0_#000,-1px_-1px_0_#888]">
				头条 @JaryYuan
			</div>
		</div>
	);
}
